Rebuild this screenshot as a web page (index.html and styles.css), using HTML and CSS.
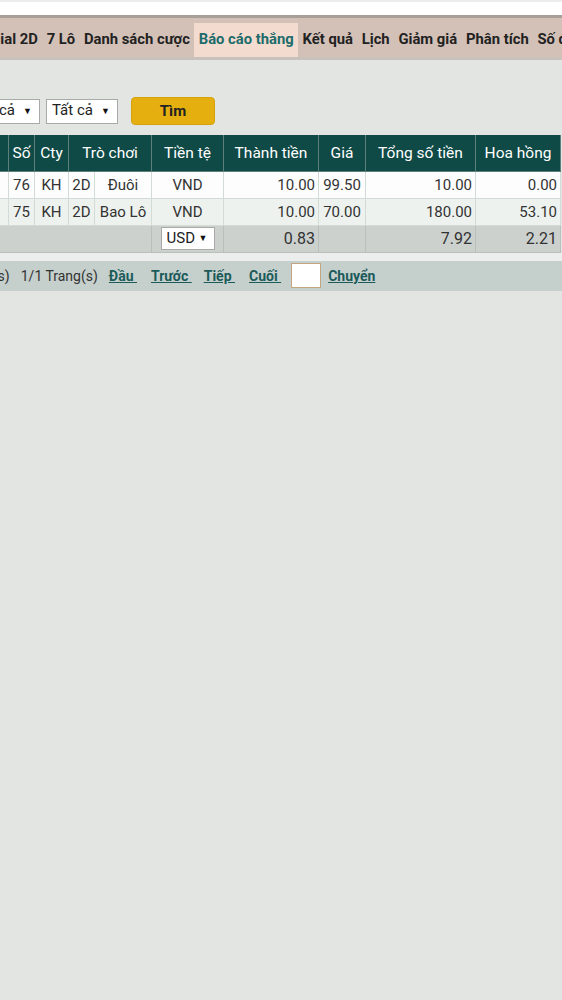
FILE: index.html
```html
<!DOCTYPE html>
<html>
<head>
    <meta charset="utf-8">
    <title>Báo cáo thắng</title>
    <link rel="stylesheet" href="styles.css">
</head>
<body>
    <div class="page">
        <div class="top-strip"></div>

        <nav class="menu">
            <a href="#">2D</a>
            <a href="#">3D</a>
            <a href="#">Special 2D</a>
            <a href="#">7 Lô</a>
            <a href="#">Danh sách cược</a>
            <a href="#" class="active">Báo cáo thắng</a>
            <a href="#">Kết quả</a>
            <a href="#">Lịch</a>
            <a href="#">Giảm giá</a>
            <a href="#">Phân tích</a>
            <a href="#">Số đẹp</a>
        </nav>

        <form class="filter">
            <label>Cty</label>
            <span class="select"><select><option>Tất cả</option></select></span>
            <span class="select"><select><option>Tất cả</option></select></span>
            <button type="button">Tìm</button>
        </form>

        <table class="report">
            <colgroup>
                <col style="width: 108px">
                <col style="width: 26px">
                <col style="width: 34px">
                <col style="width: 26px">
                <col style="width: 57px">
                <col style="width: 72px">
                <col style="width: 95px">
                <col style="width: 47px">
                <col style="width: 110px">
                <col style="width: 85px">
            </colgroup>
            <thead>
                <tr>
                    <th>Ngày</th>
                    <th>Số</th>
                    <th>Cty</th>
                    <th colspan="2">Trò chơi</th>
                    <th>Tiền tệ</th>
                    <th>Thành tiền</th>
                    <th>Giá</th>
                    <th>Tổng số tiền</th>
                    <th>Hoa hồng</th>
                </tr>
            </thead>
            <tbody>
                <tr>
                    <td>21/05</td>
                    <td class="c">76</td>
                    <td class="c">KH</td>
                    <td class="c">2D</td>
                    <td class="c">Đuôi</td>
                    <td class="c">VND</td>
                    <td class="n">10.00</td>
                    <td class="c">99.50</td>
                    <td class="n">10.00</td>
                    <td class="n">0.00</td>
                </tr>
                <tr class="alt">
                    <td>21/05</td>
                    <td class="c">75</td>
                    <td class="c">KH</td>
                    <td class="c">2D</td>
                    <td class="c">Bao Lô</td>
                    <td class="c">VND</td>
                    <td class="n">10.00</td>
                    <td class="c">70.00</td>
                    <td class="n">180.00</td>
                    <td class="n">53.10</td>
                </tr>
                <tr class="total">
                    <td colspan="5">Tổng</td>
                    <td class="c">
                        <span class="select small"><select><option>USD</option></select></span>
                    </td>
                    <td class="n">0.83</td>
                    <td></td>
                    <td class="n">7.92</td>
                    <td class="n">2.21</td>
                </tr>
            </tbody>
        </table>

        <div class="pager">
            <span>Tổng 2 Dòng(s)</span>
            <span>1/1 Trang(s)</span>
            <a href="#">Đầu&nbsp;</a>
            <a href="#">Trước&nbsp;</a>
            <a href="#">Tiếp&nbsp;</a>
            <a href="#">Cuối&nbsp;</a>
            <input type="text" class="goto">
            <a href="#">Chuyển</a>
        </div>
    </div>
</body>
</html>
```

FILE: styles.css
```css
* {
    box-sizing: border-box;
}

html, body {
    margin: 0;
}

body {
    font-family: Roboto, 'Liberation Sans', sans-serif;
    font-size: 14px;
    color: #333;
    background: #e3e5e3;
    overflow: hidden;
}

/* page is wider than the phone screen, scrolled to the right */
.page {
    margin-left: -100px;
    width: 800px;
}

.top-strip {
    height: 15px;
    background: #fff;
    border-top: 2px solid #ececec;
}

/* top menu */
.menu {
    display: flex;
    height: 45px;
    padding: 5px 0 0 9px;
    background: #d3c1b7;
    border-top: 3px solid #a89f98;
    border-bottom: 3px solid #c8c2bc;
    white-space: nowrap;
}

.menu a {
    padding: 0 4.4px;
    line-height: 33px;
    font-size: 14.8px;
    font-weight: bold;
    color: #222;
    text-decoration: none;
}

.menu a.active {
    background: #f3dccf;
    color: #1d6b6b;
}

/* search row */
.filter {
    display: flex;
    align-items: center;
    gap: 6px;
    height: 28px;
    margin: 37px 0 10px;
    padding-left: 38px;
}

.filter label {
    width: 24px;
}

.select {
    position: relative;
    display: inline-block;
}

.select select {
    appearance: none;
    -webkit-appearance: none;
    width: 72px;
    height: 25px;
    padding: 0 0 2px 5px;
    font-family: inherit;
    font-size: 15px;
    color: #222;
    background: #fff;
    border: 1px solid #a9a9a9;
    border-radius: 0;
}

.select::after {
    content: '\25BC';
    position: absolute;
    right: 8px;
    top: 7px;
    font-size: 9px;
    color: #111;
    pointer-events: none;
}

.select.small select {
    width: 54px;
    height: 23px;
    vertical-align: middle;
}

.select.small::after {
    top: 6px;
    right: 7px;
}

.filter button {
    width: 84px;
    height: 28px;
    margin-left: 7px;
    font-family: inherit;
    font-size: 15px;
    font-weight: bold;
    color: #222;
    background: #e5b00f;
    border: 1px solid #d6a20b;
    border-radius: 4px;
}

/* report table */
.report {
    width: 660px;
    table-layout: fixed;
    border-collapse: collapse;
}

.report th {
    height: 36px;
    font-weight: normal;
    font-size: 15.5px;
    color: #fff;
    background: #104a47;
    border: 1px solid #5e7f7c;
    border-top: none;
    white-space: nowrap;
}

.report td {
    height: 27px;
    padding: 0 3px;
    font-size: 15px;
    background: #fcfdfc;
    border: 1px solid #d3dbd7;
    white-space: nowrap;
}

.report tr.alt td {
    background: #edf2ef;
}

.report tr.total td {
    background: #ccd1ce;
    border-color: #b9c0bc;
    font-size: 16px;
}

.report .c {
    text-align: center;
}

.report .n {
    text-align: right;
}

/* paging bar */
.pager {
    display: flex;
    align-items: center;
    gap: 11px;
    height: 38px;
    padding-left: 14px;
    background: #c5cfcc;
    border-top: 8px solid #eceeed;
    white-space: nowrap;
}

.pager a {
    margin-right: 3px;
    font-weight: bold;
    color: #1b5b5a;
}

.pager a:nth-of-type(2) {
    margin-right: 1px;
}

.pager .goto {
    width: 30px;
    height: 25px;
    margin: 0 -4px 0 -4px;
    background: #fff;
    border: 1px solid #c4a582;
}
```
